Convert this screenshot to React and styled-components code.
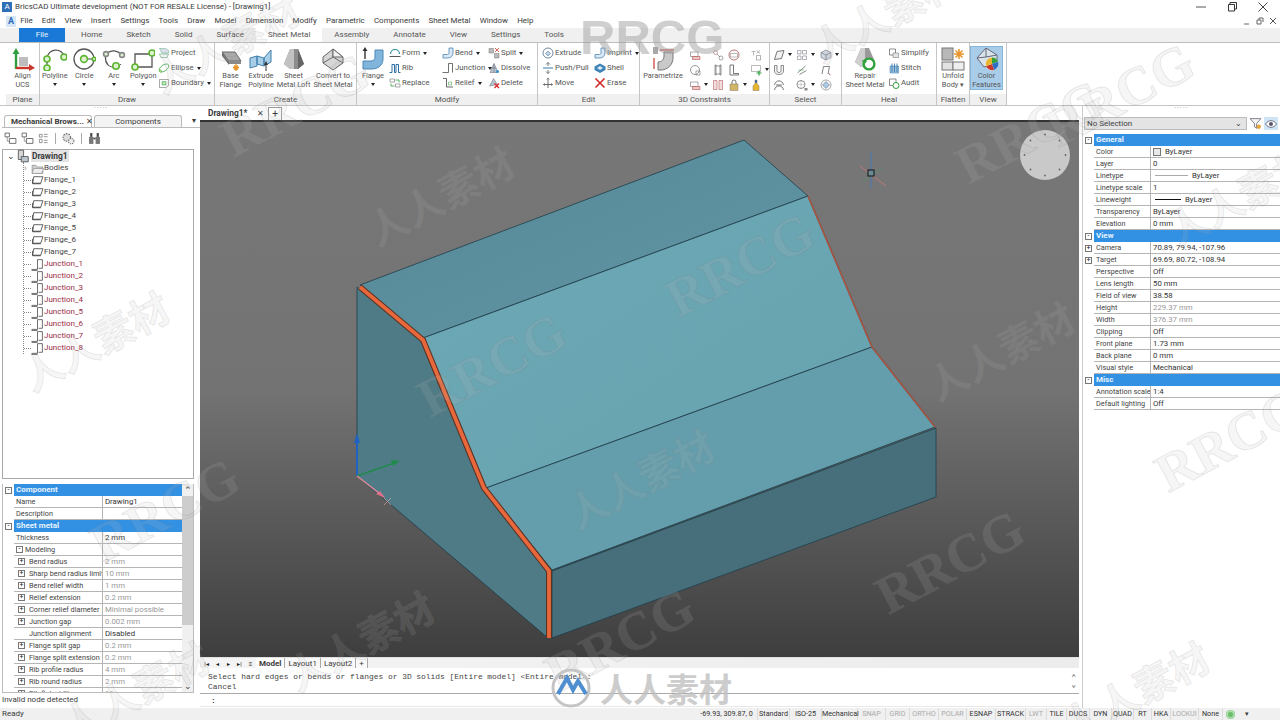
import styled, { createGlobalStyle } from "styled-components";

const GlobalStyle = createGlobalStyle`
  html, body { margin: 0; padding: 0; background: #fff; }
  * { box-sizing: border-box; }
`;

const blue = "#3391e4";

// ---------- icons ----------
const Svg = ({ s = 12, children }) => (
  <svg width={s} height={s} viewBox="0 0 24 24" fill="none" style={{ flex: "none" }}>
    {children}
  </svg>
);
const Dot = ({ x, y, c = "#5cb531", r = 3 }) => <circle cx={x} cy={y} r={r} fill="#dff2d0" stroke={c} strokeWidth="1.6" />;

const icons = {
  align: (<><path d="M5 22V4" stroke="#2f9e3f" strokeWidth="2.4" /><path d="M1.5 7 5 1l3.5 6z" fill="#2f9e3f" /><path d="M5 21h14" stroke="#c9362b" strokeWidth="2.4" /><path d="m18 17 6 4-6 3z" fill="#c9362b" /><rect x="8" y="10" width="9" height="9" fill="#bdbdbd" /></>),
  polyline: (<><path d="M4 12C4 1 20 0 21 10" stroke="#555" strokeWidth="1.3" /><path d="M4 12v8" stroke="#555" strokeWidth="1.3" /><Dot x={4} y={12} /><Dot x={21} y={10} /><Dot x={4} y={21} /></>),
  circle: (<><circle cx="12" cy="12" r="10" stroke="#555" strokeWidth="1.3" /><path d="M12 12h10" stroke="#444" /><Dot x={12} y={12} r={3.4} /><Dot x={22} y={12} r={1.8} /></>),
  arc: (<><path d="M6 18C-2 8 10-2 20 8" stroke="#555" strokeWidth="1.3" /><path d="M6 18c5 4 11 2 13-1" stroke="#555" /><Dot x={20} y={8} r={2.4} c="#888" /><Dot x={4} y={7} r={2.4} c="#888" /><Dot x={14} y={19} r={3.2} /></>),
  polygon: (<><path d="M4 7h17v13H4z" stroke="#555" strokeWidth="1.3" /><Dot x={21} y={6} /><Dot x={4} y={20} /></>),
  base: (<><path d="M3 5h13l6 9H10z" fill="#a8a8a8" stroke="#666" /><path d="M3 5v4l7 9v-4z" fill="#6c6c6c" /><path d="M10 14h12v3H10z" fill="#8a8a8a" /><path d="M17 17v7M14 20.5h6M15 18.5l4 4M19 18.5l-4 4" stroke="#e8962e" strokeWidth="1.3" /></>),
  extrude: (<><path d="M1 11l7-2v10l-7 2zM8 9l7 2v8l-7-2zM15 11l7-8v12l-7 4z" fill="#a9cfe8" stroke="#3e7fae" /><path d="M17 24v-7" stroke="#333" /><path d="m15 18 2-4 2 4z" fill="#333" /></>),
  loft: (<><path d="M8 2h8l6 15-6 5H8l-6-5z" fill="#8d8d8d" /><path d="M8 2h4v20H8l-6-5z" fill="#c2c2c2" /><path d="M16 2l6 15-6 5z" fill="#666" /></>),
  convert: (<><path d="M12 2 22 10v6l-10 7L2 16v-6z" fill="#d6d6d6" stroke="#666" /><path d="M12 2v8l-10 6M12 10l10 6" stroke="#666" /><path d="M12 10 22 10 12 2z" fill="#f1f1f1" stroke="#666" /></>),
  flange: (<><path d="M14 3h8v9c0 7-6 10-11 10H2v-8h8c3 0 4-2 4-4z" fill="#82b5dc" stroke="#4a86b5" /><path d="M4 12V3" stroke="#333" strokeWidth="1.4" /><path d="M1.5 4 4 0l2.5 4z" fill="#333" /></>),
  parametrize: (<><path d="M13 5h9v6c0 7-6 12-12 12H7v-8c4 0 6-3 6-6z" fill="#c9c9c9" stroke="#777" /><path d="M9 3h14" stroke="#c9362b" strokeWidth="1.2" /><path d="M3 11v11" stroke="#c9362b" strokeWidth="1.2" /><rect x="2" y="0" width="5" height="7" fill="#a8a8a8" /></>),
  repair: (<><path d="M8 1h8l6 14-6 5H8l-6-5z" fill="#9a9a9a" /><path d="M8 1h4v19H8l-6-5z" fill="#cfcfcf" /><circle cx="16" cy="17" r="5.4" stroke="#31a13c" strokeWidth="2.4" fill="#fff" /><path d="m9 13 5 1-3 4z" fill="#31a13c" /></>),
  unfold: (<><rect x="1" y="1" width="11" height="12" fill="#b8b8b8" stroke="#777" /><rect x="1" y="15" width="11" height="8" fill="#e2e2e2" stroke="#777" /><rect x="12" y="15" width="11" height="8" fill="#eee" stroke="#777" /><path d="M18 2v10M13 7h10M14.5 3.5l7 7M21.5 3.5l-7 7" stroke="#e8962e" strokeWidth="1.6" /></>),
  colorFeat: (<><path d="M11 1 2 11l7 9 13-4V8z" fill="#d8e3ea" stroke="#667" /><path d="M11 1v9l-9 1M11 10l11-2" stroke="#667" /><circle cx="17" cy="17" r="6.5" fill="#fff" /><path d="M17 17V10.5a6.5 6.5 0 0 1 6 4z" fill="#31a13c" /><path d="M17 17l6-2.5a6.5 6.5 0 0 1-4 8.5z" fill="#2f6fc4" /><path d="M17 17l2 6a6.5 6.5 0 0 1-8-4z" fill="#c9362b" /><path d="M17 17l-6 2a6.5 6.5 0 0 1 6-8.500z" fill="#e5b62e" /></>),
  project: (<><path d="M3 3h12l6 4v5H8z" fill="#dde" stroke="#5a7" /><path d="M3 14h18l-3 7H6z" stroke="#2e8b57" /></>),
  ellipse: (<><ellipse cx="12" cy="12" rx="11" ry="6" transform="rotate(-35 12 12)" stroke="#2f9e3f" strokeWidth="1.4" /><Dot x={5} y={18} r={2} /></>),
  boundary: (<><path d="M3 5h18v12l-5 4H3z" stroke="#555" /><path d="M8 9h8v7H8z" fill="#b8e0b0" stroke="#2f9e3f" /></>),
  form: (<><path d="M3 14a9 9 0 0 1 18 0" stroke="#2f8f9f" strokeWidth="2.4" /><path d="M1 19h22" stroke="#555" strokeWidth="2" /></>),
  rib: (<path d="M1 21h5V5h5v16h3V5h5v16h4" stroke="#2e6ea6" strokeWidth="2" />),
  replace: (<><path d="M2 4h9v6H2zM13 14h9v6h-9z" stroke="#555" /><path d="M13 6h7v5" stroke="#2f9e3f" strokeWidth="1.6" /><path d="M11 18H4v-5" stroke="#2f9e3f" strokeWidth="1.6" /></>),
  bend: (<path d="M14 2h8v10c0 6-5 10-10 10H2v-7h9c2 0 3-2 3-4z" fill="#d9e8f4" stroke="#4a86b5" strokeWidth="1.6" />),
  junction: (<path d="M1 21h12V3h8v18" stroke="#444" strokeWidth="1.5" />),
  relief: (<><path d="M2 3h7v17h13" stroke="#444" strokeWidth="1.6" /><path d="M13 10h6v6h-6z" stroke="#2f9e3f" /></>),
  split: (<><path d="M2 3h9v9H2z" fill="#bbb" stroke="#777" /><path d="M13 13h9v9h-9z" fill="#bbb" stroke="#777" /><path d="m14 2 8 8M22 2l-8 8" stroke="#c9362b" strokeWidth="1.6" /></>),
  dissolve: (<><path d="M4 21 12 3l8 18z" fill="#b7c4ce" stroke="#667" /><path d="M12 3v18M8 12h9" stroke="#667" /><circle cx="19" cy="19" r="3" fill="#3a8fc9" /></>),
  erase3d: (<><path d="M3 18 11 3l8 12z" fill="#b7c4ce" stroke="#667" /><path d="m13 13 9 9M22 13l-9 9" stroke="#d22" strokeWidth="2.4" /></>),
  extrudeS: (<><circle cx="12" cy="12" r="10" stroke="#4a6a8a" strokeWidth="1.6" /><path d="M7 13l5-5 5 5-5 5z" fill="#b9d2e5" stroke="#4a6a8a" /></>),
  push: (<><path d="M2 12h20" stroke="#3a7ca8" strokeWidth="2" /><path d="M12 1v7M12 23v-7" stroke="#555" strokeWidth="1.6" /><path d="m8 5 4-4 4 4M8 19l4 4 4-4" stroke="#555" strokeWidth="1.4" /></>),
  move: (<><path d="M12 2v20M3 15h18" stroke="#444" strokeWidth="1.5" /><path d="m9 5 3-3 3 3M6 12l-3 3 3 3M18 12l3 3-3 3" stroke="#444" /></>),
  shell: (<><path d="M12 3 23 9v7l-11 6L1 16V9z" fill="#3e84b8" /><path d="M12 8l6 4-6 4-6-4z" fill="#d8eaf6" /></>),
  erase: (<path d="m3 3 18 18M21 3 3 21" stroke="#d42020" strokeWidth="3" />),
  simplify: (<><path d="M3 4h12v12H3z" stroke="#666" strokeWidth="1.5" /><path d="M10 12h11v9H10z" fill="#e5e5e5" stroke="#666" /></>),
  stitch: (<><path d="M4 8h17v14H4z" fill="#9ec4e0" stroke="#2e6ea6" /><path d="M8 3v17M13 3v17M18 3v17" stroke="#2e6ea6" strokeWidth="1.6" /></>),
  audit: (<><path d="M3 4h13v13H3z" stroke="#666" strokeWidth="1.5" /><circle cx="16" cy="17" r="6" fill="#fff" stroke="#2f9e3f" strokeWidth="2" /></>),
  c1: (<><path d="M3 6h15v9H3z" stroke="#555" /><path d="M7 15h15v6H7z" fill="#eac7c7" stroke="#b33" /></>),
  c2: (<><circle cx="7" cy="7" r="4" stroke="#a55" /><path d="M10 10l6 6" stroke="#555" /><circle cx="18" cy="18" r="4" stroke="#555" /></>),
  c3: (<><circle cx="12" cy="12" r="10" stroke="#a55" strokeWidth="1.6" /><path d="M5 9h14v7H5z" stroke="#777" /></>),
  c4: (<path d="M6 2h2v20H6zM16 2h2v20h-2zM8 4h8M8 20h8" stroke="#333" />),
  c5: (<path d="M4 2h7v17h10v3H4z" stroke="#555" strokeWidth="1.6" />),
  c6: (<><path d="M3 5h8M7 5v8" stroke="#777" /><path d="M13 13h8v9h-8z" stroke="#666" /><path d="M13 3l7 6M20 3l-7 6" stroke="#777" /></>),
  c7: (<><path d="M3 3h18v12H3z" stroke="#777" /><path d="M13 18h10M18 13v10" stroke="#2f9e3f" strokeWidth="2.4" /></>),
  c8: (<><circle cx="12" cy="12" r="9" stroke="#777" strokeWidth="1.5" /><path d="M14 14h8v8h-8z" stroke="#555" /></>),
  c9: (<path d="M3 3h7v18H3zM14 3h7v18h-7z" fill="#f2dede" stroke="#a44" />),
  lock: (<><rect x="4" y="10" width="16" height="13" fill="#d2b667" stroke="#876" /><path d="M8 10V6a4 4 0 0 1 8 0v4" stroke="#777" strokeWidth="2" /></>),
  bottle: (<><path d="M10 2h4v7l4 5v9H6v-9l4-5z" fill="#e5b62e" stroke="#876" /><path d="M10 2h4v6h-4z" fill="#4a6a9a" /></>),
  s1: (<path d="M3 21 8 5l14-2-5 16z" fill="#f2f2f2" stroke="#555" strokeWidth="1.6" />),
  s2: (<path d="M3 3h7v7H3zM13 3h8v7h-8zM3 14h7v7H3zM13 14h8v7h-8z" stroke="#667" />),
  s3: (<><path d="M12 2 22 7v10l-10 5L2 17V7z" fill="#cfd8e0" stroke="#556" /><path d="M2 7l10 5 10-5M12 12v10" stroke="#556" /></>),
  s4: (<path d="M3 3v11a9 7 0 0 0 18 0V3h-5v11a4 3 0 0 1-8 0V3z" fill="#f4f4f4" stroke="#555" strokeWidth="1.3" />),
  s5: (<><path d="M3 18 19 4M7 21l14-8" stroke="#666" strokeWidth="1.5" /><path d="M5 12h11" stroke="#2f9e3f" /></>),
  s6: (<><path d="M4 20 7 5h12l-3 15" stroke="#666" strokeWidth="1.6" /><path d="m17 19 4 3" stroke="#a55" strokeWidth="2" /></>),
  s7: (<path d="M3 12c2-11 16-11 18 0M3 22c2-11 16-11 18 0M6 12h12" stroke="#555" strokeWidth="1.6" />),
  s8: (<><circle cx="10" cy="11" r="8" stroke="#666" strokeWidth="1.5" /><path d="M10 3v16M2 11h16" stroke="#aaa" /><path d="M17 18h6v5h-6z" fill="#888" /></>),
  s9: (<><circle cx="12" cy="12" r="10" stroke="#888" strokeWidth="1.5" /><path d="m12 5 7 7-7 7-7-7z" fill="#a7cbe5" stroke="#557" /></>),
  folder: (<><path d="M2 6h7l2 3h11v12H2z" fill="#cfcfcf" stroke="#777" /><path d="M5 12h18l-3 9H2z" fill="#eee" stroke="#777" /></>),
  sheet: (<><path d="M5 5h17l-4 12H3z" fill="#fff" stroke="#333" strokeWidth="1.4" /><path d="M3 9v9h15" stroke="#333" strokeWidth="1.4" /></>),
  joint: (<path d="M1 21h11V3h9v16h-7M1 23h11" stroke="#333" strokeWidth="1.3" />),
  root: (<><path d="M4 2h9v16H4z" fill="#d6d6d6" stroke="#555" strokeWidth="1.5" /><path d="M9 13h12v9H9z" fill="#bcc7cf" stroke="#555" strokeWidth="1.5" /></>),
  mb1: (<><path d="M2 2h8v7H2zM10 12h12v9H10z" stroke="#555" strokeWidth="1.5" /><path d="M6 9v8h4" stroke="#555" /></>),
  mb3: (<path d="M3 3h6v6H3zM13 3h8M13 8h8M3 14h6v7H3zM13 16h8M13 21h8" stroke="#555" strokeWidth="1.3" />),
  gears: (<><circle cx="9" cy="10" r="7" fill="#ddd" stroke="#666" strokeWidth="2" strokeDasharray="3 2" /><circle cx="17" cy="17" r="5" fill="#eee" stroke="#666" strokeWidth="2" strokeDasharray="2 2" /></>),
  binoculars: (<><rect x="2" y="9" width="8" height="13" fill="#777" /><rect x="14" y="9" width="8" height="13" fill="#777" /><rect x="4" y="2" width="4" height="7" fill="#444" /><rect x="16" y="2" width="4" height="7" fill="#444" /><path d="M10 12h4" stroke="#444" strokeWidth="3" /></>),
  filter: (<><path d="M2 3h20l-8 9v9l-4-3v-6z" fill="#f6f6f6" stroke="#667" strokeWidth="1.5" /><circle cx="18" cy="18" r="4" fill="#e8a33a" /></>),
  eye: (<><path d="M1 12c6-9 16-9 22 0-6 9-16 9-22 0z" fill="#fff" stroke="#556" strokeWidth="1.6" /><circle cx="12" cy="12" r="4" fill="#556" /></>),
};

const Icon = ({ name, s }) => <Svg s={s}>{icons[name]}</Svg>;

// ---------- data ----------
const menus = ["File", "Edit", "View", "Insert", "Settings", "Tools", "Draw", "Model", "Dimension", "Modify", "Parametric", "Components", "Sheet Metal", "Window", "Help"];
const tabs = ["Home", "Sketch", "Solid", "Surface", "Sheet Metal", "Assembly", "Annotate", "View", "Settings", "Tools"];

const flanges = [1, 2, 3, 4, 5, 6, 7].map((n) => `Flange_${n}`);
const junctions = [1, 2, 3, 4, 5, 6, 7, 8].map((n) => `Junction_${n}`);

const leftProps = [
  { head: "Component" },
  { k: "Name", v: "Drawing1" },
  { k: "Description", v: "" },
  { head: "Sheet metal" },
  { k: "Thickness", v: "2 mm" },
  { k: "Modeling", v: "", box: "-" },
  { k: "Bend radius", v: "2 mm", sub: true, dim: true },
  { k: "Sharp bend radius limit", v: "10 mm", sub: true, dim: true },
  { k: "Bend relief width", v: "1 mm", sub: true, dim: true },
  { k: "Relief extension", v: "0.2 mm", sub: true, dim: true },
  { k: "Corner relief diameter", v: "Minimal possible", sub: true, dim: true },
  { k: "Junction gap", v: "0.002 mm", sub: true, dim: true },
  { k: "Junction alignment", v: "Disabled", indent: true },
  { k: "Flange split gap", v: "0.2 mm", sub: true, dim: true },
  { k: "Flange split extension", v: "0.2 mm", sub: true, dim: true },
  { k: "Rib profile radius", v: "4 mm", sub: true, dim: true },
  { k: "Rib round radius", v: "2 mm", sub: true, dim: true },
  { k: "Rib flat width", v: "11 mm", sub: true, dim: true },
];

const rightProps = [
  { head: "General" },
  { k: "Color", v: "ByLayer", swatch: true },
  { k: "Layer", v: "0" },
  { k: "Linetype", v: "ByLayer", line: "grey" },
  { k: "Linetype scale", v: "1" },
  { k: "Lineweight", v: "ByLayer", line: "black" },
  { k: "Transparency", v: "ByLayer" },
  { k: "Elevation", v: "0 mm" },
  { head: "View" },
  { k: "Camera", v: "70.89, 79.94, -107.96", outer: "+" },
  { k: "Target", v: "69.69, 80.72, -108.94", outer: "+" },
  { k: "Perspective", v: "Off" },
  { k: "Lens length", v: "50 mm" },
  { k: "Field of view", v: "38.58" },
  { k: "Height", v: "229.37 mm", dim: true },
  { k: "Width", v: "376.37 mm", dim: true },
  { k: "Clipping", v: "Off" },
  { k: "Front plane", v: "1.73 mm" },
  { k: "Back plane", v: "0 mm" },
  { k: "Visual style", v: "Mechanical" },
  { head: "Misc" },
  { k: "Annotation scale", v: "1:4" },
  { k: "Default lighting", v: "Off" },
];

const statusItems = [
  ["-69.93, 309.87, 0", 62, 1], ["Standard", 32, 1], ["ISO-25", 32, 1], ["Mechanical", 36, 1],
  ["SNAP", 28, 0], ["GRID", 24, 0], ["ORTHO", 29, 0], ["POLAR", 28, 0], ["ESNAP", 29, 1], ["STRACK", 30, 1],
  ["LWT", 21, 0], ["TILE", 20, 1], ["DUCS", 23, 1], ["DYN", 22, 1], ["QUAD", 22, 1], ["RT", 18, 1], ["HKA", 19, 1],
  ["LOCKUI", 28, 0], ["None", 24, 1],
];

const marksText = [
  [440, 195], [1000, 350], [640, 478], [95, 340], [360, 640], [225, 42], [885, 12], [1135, 690], [135, 690], [1240, 195],
];
const marksLogo = [
  [1030, 132], [740, 265], [492, 365], [165, 510], [1230, 440], [950, 562], [295, 105], [1120, 95], [620, 640],
];

// ---------- ribbon parts ----------
const LargeButton = ({ icon, w, lines, arrow, active }) => (
  <Large $w={w} $active={active}>
    <Icon name={icon} s={24} />
    <LargeLabel>
      {lines.map((l) => (
        <span key={l}>{l}</span>
      ))}
      {arrow && <Caret />}
    </LargeLabel>
  </Large>
);

const SmallColumn = ({ w, items }) => (
  <SmallCol $w={w}>
    {items.map(([icon, label, arrow]) => (
      <SmallBtn key={label}>
        <Icon name={icon} s={12} />
        <span>{label}</span>
        {arrow && <InlineCaret />}
      </SmallBtn>
    ))}
  </SmallCol>
);

const IconGrid = ({ cols, cells }) => (
  <Grid $cols={cols}>
    {cells.map(([icon, arrow], i) => (
      <GridCell key={i}>
        {icon && <Icon name={icon} s={12} />}
        {arrow && <InlineCaret />}
      </GridCell>
    ))}
  </Grid>
);

const Group = ({ title, w, children }) => (
  <GroupBox $w={w}>
    <GroupBody>{children}</GroupBody>
    <GroupTitle>{title}</GroupTitle>
  </GroupBox>
);

const PropTable = ({ rows, first, keyPad }) => (
  <>
    {rows.map((r) =>
      r.head ? (
        <PropRow key={r.head}>
          <BoxCell><Expander>-</Expander></BoxCell>
          <PropHead>{r.head}</PropHead>
        </PropRow>
      ) : (
        <PropRow key={r.k}>
          <BoxCell>{r.outer && <Expander>{r.outer}</Expander>}</BoxCell>
          <PropCols $first={first}>
            <PropKey $pad={keyPad}>
              {r.box && <Expander>{r.box}</Expander>}
              {r.sub && <SubBox><Expander>+</Expander></SubBox>}
              {r.indent && <SubBox />}
              <span>{r.k}</span>
            </PropKey>
            <PropVal $dim={r.dim}>
              {r.swatch && <Swatch />}
              {r.line && <LineSample $c={r.line} />}
              <span>{r.v}</span>
            </PropVal>
          </PropCols>
        </PropRow>
      )
    )}
  </>
);

// ---------- viewport drawing ----------
const ModelDrawing = () => (
  <ModelSvg viewBox="200 122 879 535">
    <defs>
      <linearGradient id="topFace" x1="0" y1="0" x2="1" y2="1">
        <stop offset="0" stopColor="#578896" />
        <stop offset="1" stopColor="#6096a4" />
      </linearGradient>
      <linearGradient id="midFace" x1="0" y1="0" x2="1" y2="1">
        <stop offset="0" stopColor="#6ca8b5" />
        <stop offset="1" stopColor="#67a2af" />
      </linearGradient>
    </defs>
    <g stroke="#1f3d49" strokeWidth="0.8">
      <polygon points="360,285 744,140 808,196 423,338" fill="url(#topFace)" />
      <polygon points="423,338 808,196 872,347 486,488" fill="url(#midFace)" />
      <polygon points="486,488 872,347 935,427 552,570" fill="#649dab" />
      <polygon points="357,287 423,340 484,490 548,572 548,638 357,476" fill="#4f7b86" />
      <polygon points="552,571 936,428 936,497 552,638" fill="#476f7b" />
    </g>
    <polyline points="360,287 423,340 484,488 549,571 549,638" fill="none" stroke="#5a3324" strokeWidth="6" />
    <polyline points="360,287 423,340 484,488 549,571 549,638" fill="none" stroke="#e8683c" strokeWidth="3.8" />
    <polyline points="808,196 872,347 935,427" fill="none" stroke="#8a4a3c" strokeWidth="1.6" />
    <polyline points="808,196 872,347 935,427" fill="none" stroke="#c8604a" strokeWidth="0.7" />
    {/* ucs icon */}
    <path d="M357 476V440" stroke="#1f62c4" strokeWidth="2" />
    <path d="m354 443 3-10 3 10z" fill="#1f62c4" />
    <path d="M357 476 397 462" stroke="#1f8a4c" strokeWidth="1.4" />
    <path d="m391 460 9 1-7 5z" fill="#1f8a4c" />
    <path d="M357 476 384 497" stroke="#e28a9a" strokeWidth="1.4" />
    <path d="m376 494 9 4-5-7z" fill="#e0708a" />
    <path d="m384 498 7 7M391 498l-7 7" stroke="#d9a0a8" strokeWidth="0.7" />
    {/* cursor */}
    <path d="M871 152v36" stroke="#4a78b8" />
    <path d="m860 166 26 20" stroke="#c07878" />
    <path d="m862 182 20-14" stroke="#5f8a70" />
    <rect x="868" y="170" width="6" height="6" fill="#6b8a94" stroke="#111" />
    {/* navigation wheel */}
    <circle cx="1045" cy="155" r="25" fill="#c9c9c9" />
    {[0, 45, 90, 135, 180, 225, 270, 315].map((a) => (
      <circle key={a} cx={1045 + 20.5 * Math.cos((a * Math.PI) / 180)} cy={155 + 20.5 * Math.sin((a * Math.PI) / 180)} r="0.9" fill="#666" />
    ))}
  </ModelSvg>
);

export default function App() {
  return (
    <Page>
      <GlobalStyle />
      <TitleBar>
        <AppIcon>A</AppIcon>
        <TitleText>BricsCAD Ultimate development (NOT FOR RESALE License) - [Drawing1]</TitleText>
        <WinButtons>
          <svg width="10" height="10" viewBox="0 0 10 10"><path d="M0 5h10" stroke="#555" /></svg>
          <svg width="10" height="10" viewBox="0 0 10 10" fill="none"><path d="M1.5 2.5h6V9h-6zM3 2.500V.5h6.500V7H7.500" stroke="#333" /></svg>
          <svg width="10" height="10" viewBox="0 0 10 10"><path d="m.5.5 9 9M9.500.5l-9 9" stroke="#444" /></svg>
        </WinButtons>
      </TitleBar>
      <MenuBar>
        <MenuIcon>A</MenuIcon>
        {menus.map((m) => (
          <MenuItem key={m}>{m}</MenuItem>
        ))}
        <DocButtons>
          <svg width="8" height="8" viewBox="0 0 8 8"><path d="M1 7h5" stroke="#666" /></svg>
          <svg width="8" height="8" viewBox="0 0 8 8" fill="none"><path d="M1 3h4v4H1zM3 3V1h4v4" stroke="#666" /></svg>
          <svg width="8" height="8" viewBox="0 0 8 8"><path d="m1 1 6 6M7 1 1 7" stroke="#555" /></svg>
        </DocButtons>
      </MenuBar>
      <TabRow>
        <FileTab>File</FileTab>
        {tabs.map((t) => (
          <RibbonTab key={t} $active={t === "Sheet Metal"}>{t}</RibbonTab>
        ))}
      </TabRow>
      <Ribbon>
        <Group title="Plane" w={34}>
          <LargeButton icon="align" w={33} lines={["Align", "UCS"]} />
        </Group>
        <Group title="Draw" w={175}>
          <LargeButton icon="polyline" w={29.5} lines={["Polyline"]} arrow />
          <LargeButton icon="circle" w={29.5} lines={["Circle"]} arrow />
          <LargeButton icon="arc" w={29.5} lines={["Arc"]} arrow />
          <LargeButton icon="polygon" w={29.5} lines={["Polygon"]} arrow />
          <SmallColumn w={55} items={[["project", "Project"], ["ellipse", "Ellipse", 1], ["boundary", "Boundary", 1]]} />
        </Group>
        <Group title="Create" w={142}>
          <LargeButton icon="base" w={31} lines={["Base", "Flange"]} />
          <LargeButton icon="extrude" w={30} lines={["Extrude", "Polyline"]} />
          <LargeButton icon="loft" w={35} lines={["Sheet", "Metal Loft"]} />
          <LargeButton icon="convert" w={44} lines={["Convert to", "Sheet Metal"]} />
        </Group>
        <Group title="Modify" w={181}>
          <LargeButton icon="flange" w={32} lines={["Flange"]} arrow />
          <SmallColumn w={53} items={[["form", "Form", 1], ["rib", "Rib"], ["replace", "Replace"]]} />
          <SmallColumn w={46} items={[["bend", "Bend", 1], ["junction", "Junction", 1], ["relief", "Relief", 1]]} />
          <SmallColumn w={49} items={[["split", "Split", 1], ["dissolve", "Dissolve"], ["erase3d", "Delete"]]} />
        </Group>
        <Group title="Edit" w={102}>
          <Spacer $w={4} />
          <SmallColumn w={52} items={[["extrudeS", "Extrude"], ["push", "Push/Pull"], ["move", "Move"]]} />
          <SmallColumn w={45} items={[["bend", "Imprint", 1], ["shell", "Shell"], ["erase", "Erase"]]} />
        </Group>
        <Group title="3D Constraints" w={130}>
          <LargeButton icon="parametrize" w={46} lines={["Parametrize"]} />
          <IconGrid
            cols="23px 16px 22px 18px"
            cells={[
              ["c1"], ["c2"], ["c3"], ["c6"],
              ["c8"], ["c4"], ["c5"], ["c7", 1],
              ["c1", 1], ["c9"], ["lock", 1], ["bottle"],
            ]}
          />
        </Group>
        <Group title="Select" w={72}>
          <IconGrid
            cols="23px 24px 22px"
            cells={[
              ["s1", 1], ["s2", 1], ["s3", 1],
              ["s4"], ["s5"], ["s6"],
              ["s7"], ["s8", 1], ["s9"],
            ]}
          />
        </Group>
        <Group title="Heal" w={95}>
          <LargeButton icon="repair" w={46} lines={["Repair", "Sheet Metal"]} />
          <SmallColumn w={46} items={[["simplify", "Simplify"], ["stitch", "Stitch"], ["audit", "Audit"]]} />
        </Group>
        <Group title="Flatten" w={33}>
          <LargeButton icon="unfold" w={32} lines={["Unfold", "Body ▾"]} />
        </Group>
        <Group title="View" w={37}>
          <LargeButton icon="colorFeat" w={33} lines={["Color", "Features"]} active />
        </Group>
      </Ribbon>
      <Body>
        <LeftPanel>
          <Grip>·····</Grip>
          <PanelTabs>
            <PanelTab $active>Mechanical Brows... <b>✕</b></PanelTab>
            <PanelTab>Components</PanelTab>
            <PanelMenu>▾</PanelMenu>
          </PanelTabs>
          <PanelTools>
            <Icon name="mb1" s={13} />
            <Icon name="mb1" s={13} />
            <Icon name="mb3" s={11} />
            <ToolSep />
            <Icon name="gears" s={13} />
            <ToolSep />
            <Icon name="binoculars" s={13} />
          </PanelTools>
          <TreeBox>
            <RootRow>
              <Chevron>⌄</Chevron>
              <Icon name="root" s={14} />
              <RootLabel>Drawing1</RootLabel>
            </RootRow>
            <TreeList>
              <TreeRow>
                <BodiesArrow>›</BodiesArrow>
                <Icon name="folder" s={13} />
                <TreeLabel>Bodies</TreeLabel>
              </TreeRow>
              {flanges.map((f) => (
                <TreeRow key={f}>
                  <Tick />
                  <Icon name="sheet" s={13} />
                  <TreeLabel>{f}</TreeLabel>
                </TreeRow>
              ))}
              {junctions.map((j) => (
                <TreeRow key={j}>
                  <Tick />
                  <Icon name="joint" s={13} />
                  <TreeLabel $red>{j}</TreeLabel>
                </TreeRow>
              ))}
            </TreeList>
          </TreeBox>
          <PropsBox>
            <PropsScroll>
              <PropTable rows={leftProps} first="89px" keyPad={2} />
            </PropsScroll>
            <Scrollbar>
              <ScrollArrow>⌃</ScrollArrow>
              <ScrollThumb />
              <ScrollArrow>⌄</ScrollArrow>
            </Scrollbar>
          </PropsBox>
          <Message>Invalid node detected</Message>
        </LeftPanel>
        <Center>
          <DocTabs>
            <DocTab>Drawing1* <b>✕</b></DocTab>
            <DocPlus>+</DocPlus>
          </DocTabs>
          <Viewport>
            <ModelDrawing />
          </Viewport>
          <LayoutBar>
            <NavBtn>|◂</NavBtn>
            <NavBtn>◂</NavBtn>
            <NavBtn>▸</NavBtn>
            <NavBtn>▸|</NavBtn>
            <NavBtn>≡</NavBtn>
            <LayoutTab $active>Model</LayoutTab>
            <LayoutTab>Layout1</LayoutTab>
            <LayoutTab>Layout2</LayoutTab>
            <LayoutTab>+</LayoutTab>
          </LayoutBar>
          <Command>
            <CommandHistory>
              <div>
                <CommandLine>Select hard edges or bends or flanges or 3D solids [Entire model] &lt;Entire model&gt;:</CommandLine>
                <CommandLine>Cancel</CommandLine>
              </div>
              <ScrollHint>⌃<br />⌄</ScrollHint>
            </CommandHistory>
            <CommandInput>:</CommandInput>
          </Command>
        </Center>
        <RightPanel>
          <Grip>·····</Grip>
          <SelectionRow>
            <Combo>
              <span>No Selection</span>
              <span>⌄</span>
            </Combo>
            <Icon name="filter" s={13} />
            <EyeButton><Icon name="eye" s={12} /></EyeButton>
          </SelectionRow>
          <RightGrid>
            <PropTable rows={rightProps} first="57px" keyPad={2} />
          </RightGrid>
        </RightPanel>
      </Body>
      <StatusBar>
        <Ready>Ready</Ready>
        <StatusItems>
          {statusItems.map(([t, w, on]) => (
            <StatusItem key={t} $w={w} $on={on}>{t}</StatusItem>
          ))}
          <StatusDot />
          <StatusCaret>▾</StatusCaret>
        </StatusItems>
      </StatusBar>

      {marksText.map(([x, y]) => (
        <MarkCjk key={`${x}-${y}`} style={{ left: x, top: y }}>人人素材</MarkCjk>
      ))}
      {marksLogo.map(([x, y]) => (
        <MarkLatin key={`${x}-${y}`} style={{ left: x, top: y }}>RRCG</MarkLatin>
      ))}
      <TopBrand>RRCG</TopBrand>
      <BottomBrand>
        <svg width="42" height="40" viewBox="0 0 42 40" fill="none">
          <circle cx="21" cy="20" r="18" stroke="#c4c4c4" strokeWidth="3" />
          <path d="M8 26 17 10l6 12 5-9 8 13" stroke="#4f8fd0" strokeWidth="4" />
        </svg>
        <span>人人素材</span>
      </BottomBrand>
    </Page>
  );
}

// ---------- styles ----------
const Page = styled.div`
  position: relative;
  width: 1280px;
  height: 720px;
  overflow: hidden;
  display: flex;
  flex-direction: column;
  background: #fff;
  color: #3a3a3a;
  font-family: Roboto, "Liberation Sans", sans-serif;
  font-size: 8px;
  line-height: 12px;
`;

const TitleBar = styled.div`
  height: 14px;
  display: flex;
  align-items: center;
  padding-left: 2px;
`;

const AppIcon = styled.div`
  width: 10px;
  height: 10px;
  background: #2f6fb8;
  color: #fff;
  font-size: 8px;
  line-height: 10px;
  text-align: center;
`;

const TitleText = styled.div`
  margin-left: 3px;
  font-size: 7.95px;
`;

const WinButtons = styled.div`
  margin-left: auto;
  display: flex;
  gap: 21px;
  padding-right: 12px;
`;

const MenuBar = styled.div`
  height: 14px;
  display: flex;
  align-items: center;
  padding-left: 6px;
  gap: 9.2px;
  font-size: 7.95px;
`;

const MenuIcon = styled.div`
  width: 10px;
  height: 11px;
  background: #d6e6f6;
  color: #2f6fb8;
  font-weight: 700;
  font-size: 9px;
  line-height: 11px;
  text-align: center;
  margin-right: -5px;
`;

const MenuItem = styled.span``;

const DocButtons = styled.div`
  margin-left: auto;
  display: flex;
  gap: 5px;
  padding-right: 3px;
`;

const TabRow = styled.div`
  height: 14px;
  display: flex;
  padding-left: 19px;
  background: #f0f0f0;
  font-size: 8px;
  line-height: 14px;
  color: #555;
`;

const FileTab = styled.div`
  width: 46px;
  margin-right: 4px;
  text-align: center;
  background: #1a78d6;
  color: #e8f2fb;
`;

const RibbonTab = styled.div`
  padding: 0 12px;
  background: ${(p) => (p.$active ? "#fff" : "transparent")};
`;

const Ribbon = styled.div`
  height: 64px;
  display: flex;
  padding-left: 6px;
  border-top: 1px solid #bdbdbd;
  border-bottom: 1px solid #c4c4c4;
`;

const GroupBox = styled.div`
  width: ${(p) => p.$w}px;
  flex: none;
  display: flex;
  flex-direction: column;
  border-right: 1px solid #c6c6c6;
`;

const GroupBody = styled.div`
  flex: 1;
  display: flex;
  min-height: 0;
  padding-top: 3px;
`;

const GroupTitle = styled.div`
  height: 11px;
  line-height: 11px;
  background: #f0f0f0;
  text-align: center;
  color: #555;
`;

const Large = styled.div`
  width: ${(p) => p.$w}px;
  flex: none;
  display: flex;
  flex-direction: column;
  align-items: center;
  padding-top: 1px;
  height: 44px;
  background: ${(p) => (p.$active ? "#a9cde9" : "transparent")};
  box-shadow: ${(p) => (p.$active ? "inset 0 0 0 1px #86b6da" : "none")};
`;

const LargeLabel = styled.div`
  display: flex;
  flex-direction: column;
  align-items: center;
  font-size: 7.4px;
  line-height: 9px;
  white-space: nowrap;
  color: #555;
`;

const Caret = styled.i`
  margin-top: 3px;
  width: 0;
  height: 0;
  border: 2px solid transparent;
  border-top: 3px solid #222;
  border-bottom: 0;
`;

const InlineCaret = styled(Caret)`
  margin: 0 0 0 3px;
  flex: none;
`;

const SmallCol = styled.div`
  width: ${(p) => p.$w}px;
  flex: none;
  display: flex;
  flex-direction: column;
  padding-top: 1px;
  gap: 3px;
`;

const SmallBtn = styled.div`
  height: 12px;
  display: flex;
  align-items: center;
  white-space: nowrap;
  font-size: 7.8px;
  color: #555;
  span {
    margin-left: 1px;
  }
`;

const Spacer = styled.div`
  width: ${(p) => p.$w}px;
  flex: none;
`;

const Grid = styled.div`
  display: grid;
  grid-template-columns: ${(p) => p.$cols};
  grid-auto-rows: 15px;
  padding: 1px 0 0 3px;
`;

const GridCell = styled.div`
  display: flex;
  align-items: center;
`;

const Body = styled.div`
  flex: 1;
  min-height: 0;
  display: flex;
`;

const LeftPanel = styled.div`
  width: 200px;
  flex: none;
  display: flex;
  flex-direction: column;
  padding-left: 2px;
`;

const Grip = styled.div`
  height: 8px;
  line-height: 5px;
  text-align: center;
  color: #888;
  font-size: 7px;
  letter-spacing: 1px;
`;

const PanelTabs = styled.div`
  height: 13px;
  display: flex;
  align-items: flex-end;
  border-bottom: 1px solid #bbb;
  padding-right: 4px;
  margin-top: 1px;
`;

const PanelTab = styled.div`
  height: 12px;
  line-height: 11px;
  width: 88px;
  margin-left: 2px;
  padding-left: ${(p) => (p.$active ? "6px" : "0")};
  text-align: ${(p) => (p.$active ? "left" : "center")};
  font-size: 8px;
  white-space: nowrap;
  font-weight: ${(p) => (p.$active ? 700 : 400)};
  background: ${(p) => (p.$active ? "#fff" : "#f4f4f4")};
  border: 1px solid #bbb;
  border-bottom: 0;
  border-radius: 3px 3px 0 0;
  b {
    font-weight: 400;
  }
`;

const PanelMenu = styled.div`
  margin-left: auto;
  font-size: 8px;
`;

const PanelTools = styled.div`
  height: 21px;
  display: flex;
  align-items: center;
  gap: 4px;
  padding-left: 2px;
`;

const ToolSep = styled.i`
  width: 1px;
  height: 11px;
  background: #aaa;
  margin: 0 2px;
`;

const TreeBox = styled.div`
  width: 192px;
  height: 330px;
  border: 1px solid #a8a8a8;
  padding: 0 0 0 4px;
  flex: none;
`;

const RootRow = styled.div`
  height: 12px;
  display: flex;
  align-items: center;
  gap: 1px;
`;

const Chevron = styled.span`
  width: 8px;
  line-height: 6px;
  font-size: 9px;
`;

const RootLabel = styled.span`
  font-weight: 700;
  background: #e4e4e4;
  padding: 0 1px;
  font-size: 8.4px;
`;

const TreeList = styled.div`
  margin-left: 16px;
  border-left: 1px dotted #888;
`;

const TreeRow = styled.div`
  height: 12px;
  display: flex;
  align-items: center;
`;

const Tick = styled.i`
  width: 7px;
  border-top: 1px dotted #888;
`;

const BodiesArrow = styled.span`
  width: 7px;
  color: #888;
  font-size: 9px;
  line-height: 10px;
`;

const TreeLabel = styled.span`
  color: ${(p) => (p.$red ? "#9a2a45" : "#444")};
  font-size: 8px;
`;

const PropsBox = styled.div`
  margin-top: 5px;
  width: 192px;
  height: 209px;
  display: flex;
  border: 1px solid #bcbcbc;
  border-top: 0;
  flex: none;
`;

const PropsScroll = styled.div`
  width: 179px;
  overflow: hidden;
`;

const Scrollbar = styled.div`
  width: 11px;
  background: #f0f0f0;
  display: flex;
  flex-direction: column;
  align-items: center;
  justify-content: space-between;
`;

const ScrollArrow = styled.span`
  height: 12px;
  line-height: 12px;
  font-size: 9px;
`;

const ScrollThumb = styled.div`
  width: 100%;
  flex: 1;
  background: #cdcdcd;
  margin-bottom: 55px;
`;

const Message = styled.div`
  height: 13px;
  line-height: 14px;
  font-size: 8px;
`;

const PropRow = styled.div`
  height: 12px;
  display: flex;
  font-size: 7.8px;
`;

const BoxCell = styled.div`
  width: 11px;
  flex: none;
  display: flex;
  align-items: center;
  justify-content: center;
`;

const Expander = styled.span`
  width: 7px;
  height: 7px;
  flex: none;
  border: 1px solid #777;
  line-height: 4px;
  font-size: 7px;
  text-align: center;
  color: #222;
`;

const PropHead = styled.div`
  flex: 1;
  background: ${blue};
  color: #e6f3ff;
  font-weight: 700;
  font-size: 8px;
  padding-left: 2px;
  line-height: 12px;
`;

const PropCols = styled.div`
  flex: 1;
  display: grid;
  grid-template-columns: ${(p) => p.$first} 1fr;
  border-bottom: 1px solid #b5b5b5;
`;

const PropKey = styled.div`
  padding-left: ${(p) => p.$pad}px;
  display: flex;
  align-items: center;
  gap: 2px;
  white-space: nowrap;
  overflow: hidden;
  border-right: 1px solid #b5b5b5;
  color: #444;
  font-size: 7.3px;
`;

const SubBox = styled.span`
  width: 11px;
  flex: none;
  display: flex;
  justify-content: center;
`;

const PropVal = styled.div`
  padding-left: 2px;
  display: flex;
  align-items: center;
  gap: 4px;
  white-space: nowrap;
  overflow: hidden;
  color: ${(p) => (p.$dim ? "#999" : "#333")};
`;

const Swatch = styled.i`
  width: 8px;
  height: 8px;
  border: 1px solid #777;
  background: #e8e8e8;
`;

const LineSample = styled.i`
  width: ${(p) => (p.$c === "grey" ? "33px" : "26px")};
  margin-left: 2px;
  border-top: 1px solid ${(p) => (p.$c === "grey" ? "#aaa" : "#111")};
`;

const Center = styled.div`
  width: 879px;
  flex: none;
  display: flex;
  flex-direction: column;
`;

const DocTabs = styled.div`
  height: 16px;
  display: flex;
  align-items: flex-end;
  border-bottom: 2px solid #333;
  padding-left: 1px;
`;

const DocTab = styled.div`
  height: 13px;
  width: 67px;
  padding-left: 7px;
  font-weight: 700;
  font-size: 8.4px;
  b {
    font-weight: 400;
    margin-left: 8px;
  }
`;

const DocPlus = styled.div`
  height: 13px;
  width: 14px;
  border: 1px solid #999;
  border-bottom: 0;
  text-align: center;
  font-size: 10px;
`;

const Viewport = styled.div`
  height: 535px;
  flex: none;
  background: linear-gradient(#777 0, #737373 50%, #3e3e3e 100%);
`;

const ModelSvg = styled.svg`
  display: block;
  width: 879px;
  height: 535px;
`;

const LayoutBar = styled.div`
  height: 11px;
  display: flex;
  background: linear-gradient(90deg, #f4f4f4, #ececec);
  border-top: 1px solid #e0e0e0;
  line-height: 11px;
  padding-left: 1px;
`;

const NavBtn = styled.span`
  width: 11px;
  text-align: center;
  font-size: 6px;
  color: #111;
`;

const LayoutTab = styled.span`
  padding: 0 3px;
  background: ${(p) => (p.$active ? "#fff" : "#f8f8f8")};
  font-weight: ${(p) => (p.$active ? 700 : 400)};
  border-right: 1px solid #aaa;
  font-size: 8px;
`;

const Command = styled.div`
  flex: 1;
  display: flex;
  flex-direction: column;
`;

const CommandHistory = styled.div`
  height: 26px;
  display: flex;
  justify-content: space-between;
  padding: 4px 3px 0 8px;
  border-bottom: 1px solid #aaa;
  font-family: "Liberation Mono", monospace;
  font-size: 7.9px;
  color: #444;
`;

const CommandLine = styled.div`
  line-height: 10px;
`;

const ScrollHint = styled.div`
  font-size: 8px;
  line-height: 7px;
  padding-top: 2px;
  text-align: center;
`;

const CommandInput = styled.div`
  height: 13px;
  padding-left: 11px;
  font-family: "Liberation Mono", monospace;
  font-weight: 700;
  line-height: 13px;
  border-bottom: 1px solid #e8e8e8;
`;

const RightPanel = styled.div`
  margin-left: 3px;
  flex: 1;
  border-left: 1px solid #ccc;
  display: flex;
  flex-direction: column;
`;

const SelectionRow = styled.div`
  height: 17px;
  margin-top: 3px;
  display: flex;
  align-items: flex-start;
  gap: 2px;
`;

const Combo = styled.div`
  width: 163px;
  height: 13px;
  margin-left: 1px;
  padding: 0 4px 0 2px;
  display: flex;
  justify-content: space-between;
  background: #e4e4e4;
  border: 1px solid #bbb;
  line-height: 11px;
`;

const EyeButton = styled.div`
  width: 14px;
  height: 13px;
  display: flex;
  align-items: center;
  justify-content: center;
  background: #cfe4f5;
`;

const RightGrid = styled.div`
  flex: 1;
  overflow: hidden;
`;

const StatusBar = styled.div`
  height: 12px;
  display: flex;
  justify-content: space-between;
  background: #f0f0f0;
  padding: 0 31px 0 2px;
  line-height: 12px;
`;

const Ready = styled.span`
  font-size: 8px;
`;

const StatusItems = styled.div`
  display: flex;
  align-items: center;
`;

const StatusItem = styled.span`
  width: ${(p) => p.$w}px;
  text-align: center;
  white-space: nowrap;
  font-size: 7.2px;
  border-right: 1px solid #dcdcdc;
  color: ${(p) => (p.$on ? "#333" : "#aaa")};
`;

const StatusDot = styled.i`
  margin-left: 3px;
  width: 9px;
  height: 9px;
  border-radius: 50%;
  background: #6dbb6d;
  box-shadow: inset 0 0 0 2px #a8dca8;
`;

const StatusCaret = styled.span`
  margin-left: 10px;
  font-size: 7px;
`;

const MarkBase = styled.div`
  position: absolute;
  transform: translate(-50%, -50%) rotate(-28deg);
  white-space: nowrap;
  pointer-events: none;
  color: rgba(190, 190, 190, 0.14);
  -webkit-text-stroke: 1px rgba(120, 120, 120, 0.15);
`;

const MarkCjk = styled(MarkBase)`
  font-family: "Noto Sans CJK SC", sans-serif;
  font-weight: 700;
  font-size: 40px;
  line-height: 44px;
`;

const MarkLatin = styled(MarkBase)`
  font-family: "Liberation Serif", serif;
  font-weight: 700;
  font-size: 54px;
  line-height: 56px;
`;

const TopBrand = styled.div`
  position: absolute;
  left: 580px;
  top: 9px;
  font-family: "Liberation Sans", sans-serif;
  font-weight: 700;
  font-size: 49px;
  line-height: 56px;
  color: rgba(160, 160, 160, 0.5);
  pointer-events: none;
`;

const BottomBrand = styled.div`
  position: absolute;
  left: 550px;
  top: 668px;
  display: flex;
  align-items: center;
  gap: 8px;
  font-family: "Noto Sans CJK SC", sans-serif;
  font-weight: 700;
  font-size: 33px;
  line-height: 40px;
  color: rgba(190, 190, 190, 0.8);
  pointer-events: none;
`;
